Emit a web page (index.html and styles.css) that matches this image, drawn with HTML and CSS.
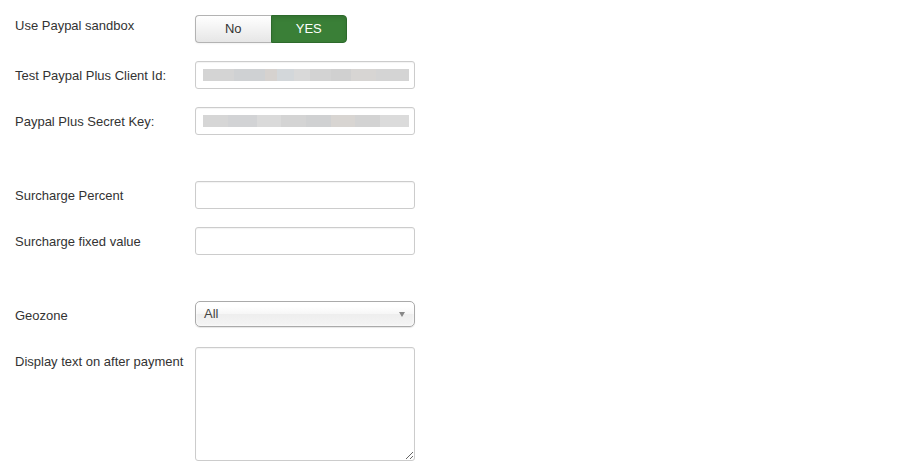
FILE: index.html
```html
<!DOCTYPE html>
<html lang="en">
<head>
    <meta charset="UTF-8">
    <title>Paypal Plus Settings</title>
    <link rel="stylesheet" href="styles.css">
</head>
<body>

    <div class="form-horizontal">
        <div class="control-group">
            <label class="control-label label-radio">Use Paypal sandbox</label>
            <div class="controls">
                <div class="btn-group">
                    <span class="btn">No</span>
                    <span class="btn btn-success">YES</span>
                </div>
            </div>
        </div>

        <div class="control-group">
            <label class="control-label">Test Paypal Plus Client Id:</label>
            <div class="controls">
                <input type="text" class="input blurred blurred-one" value="">
            </div>
        </div>

        <div class="control-group">
            <label class="control-label">Paypal Plus Secret Key:</label>
            <div class="controls">
                <input type="text" class="input blurred blurred-two" value="">
            </div>
        </div>

        <div class="control-group spaced">
            <label class="control-label">Surcharge Percent</label>
            <div class="controls">
                <input type="text" class="input" value="">
            </div>
        </div>

        <div class="control-group">
            <label class="control-label">Surcharge fixed value</label>
            <div class="controls">
                <input type="text" class="input" value="">
            </div>
        </div>

        <div class="control-group spaced">
            <label class="control-label">Geozone</label>
            <div class="controls">
                <div class="chzn-single">
                    <span>All</span>
                    <b class="caret"></b>
                </div>
            </div>
        </div>

        <div class="control-group">
            <label class="control-label">Display text on after payment</label>
            <div class="controls">
                <textarea class="textarea"></textarea>
            </div>
        </div>
    </div>

</body>
</html>
```

FILE: styles.css
```css
body {
    font-family: 'Liberation Sans', Arial, sans-serif;
    font-size: 13px;
    line-height: 18px;
    margin: 0;
    padding: 15px;
    background-color: #fff;
    color: #333;
}

.control-group {
    display: flex;
    margin-bottom: 18px;
    min-height: 28px;
}

.control-group.spaced {
    margin-top: 46px;
}

.control-label {
    width: 180px;
    flex-shrink: 0;
    padding-top: 6px;
}

.control-label.label-radio {
    padding-top: 2px;
}

.controls {
    width: 220px;
}

.btn-group {
    display: flex;
    width: 152px;
    height: 28px;
}

.btn {
    flex: 1;
    display: flex;
    align-items: center;
    justify-content: center;
    border: 1px solid #b3b3b3;
    border-right: none;
    border-radius: 4px 0 0 4px;
    background: linear-gradient(#fff, #e6e6e6);
    color: #333;
    box-shadow: inset 0 1px 0 rgba(255, 255, 255, 0.2), 0 1px 2px rgba(0, 0, 0, 0.05);
}

.btn-success {
    border: 1px solid #2d6a2c;
    border-radius: 0 4px 4px 0;
    background: #3a7f37;
    color: #fff;
    box-shadow: inset 0 2px 4px rgba(0, 0, 0, 0.1);
}

.input {
    box-sizing: border-box;
    width: 220px;
    height: 28px;
    margin: 0;
    padding: 4px 6px;
    border: 1px solid #ccc;
    border-radius: 3px;
    background-color: #fff;
    box-shadow: inset 0 1px 1px rgba(0, 0, 0, 0.05);
    font: inherit;
}

.blurred {
    background-repeat: no-repeat;
    background-position: 7px 7px;
    background-size: 206px 12px;
}

.blurred-one {
    background-image: linear-gradient(90deg,
        #d4d4d4 0, #d4d4d4 15%, #cfd1d3 15%, #cfd1d3 30%, #d6d2cf 30%, #d6d2cf 36%,
        #d3d7da 36%, #d3d7da 44%, #d9d9d9 44%, #d9d9d9 52%, #d3d3d3 52%, #d3d3d3 62%,
        #d0d0d0 62%, #d0d0d0 72%, #d7d5d3 72%, #d7d5d3 84%, #d4d4d4 84%, #d4d4d4 100%);
}

.blurred-two {
    background-image: linear-gradient(90deg,
        #d6d6d6 0, #d6d6d6 12%, #d2d3d5 12%, #d2d3d5 26%, #dadada 26%, #dadada 38%,
        #d4d4d4 38%, #d4d4d4 50%, #d0d1d2 50%, #d0d1d2 62%, #d8d5d2 62%, #d8d5d2 74%,
        #d3d3d3 74%, #d3d3d3 86%, #dbdbdb 86%, #dbdbdb 100%);
}

.chzn-single {
    box-sizing: border-box;
    position: relative;
    width: 220px;
    height: 26px;
    padding: 3px 8px;
    border: 1px solid #aaa;
    border-radius: 5px;
    background: linear-gradient(#fff 20%, #f6f6f6 50%, #eee 52%, #f4f4f4 100%);
    box-shadow: inset 0 0 3px #fff, 0 1px 1px rgba(0, 0, 0, 0.1);
    color: #444;
}

.caret {
    position: absolute;
    right: 9px;
    top: 10px;
    border-left: 3px solid transparent;
    border-right: 3px solid transparent;
    border-top: 5px solid #888;
}

.textarea {
    box-sizing: border-box;
    display: block;
    width: 220px;
    height: 114px;
    margin: 0;
    padding: 4px 6px;
    border: 1px solid #ccc;
    border-radius: 3px;
    box-shadow: inset 0 1px 1px rgba(0, 0, 0, 0.05);
    font: inherit;
}
```
